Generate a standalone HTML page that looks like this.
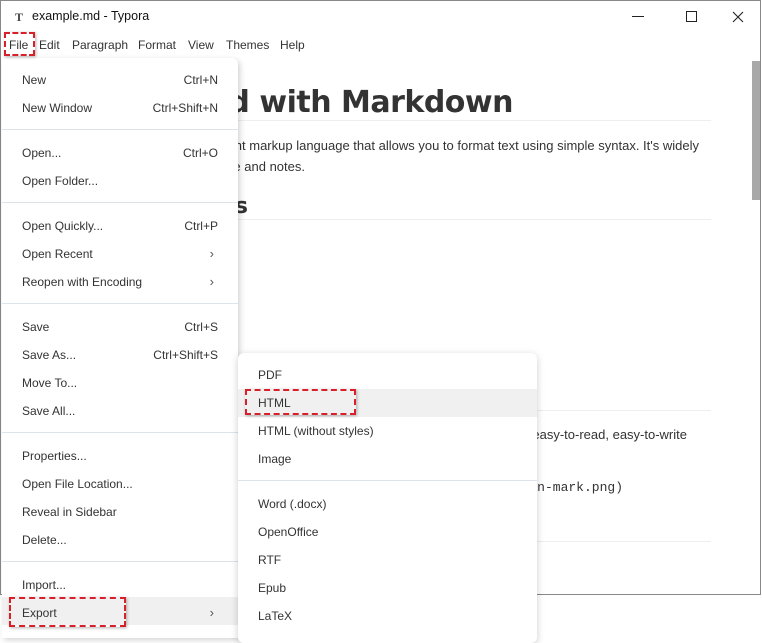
<!DOCTYPE html>
<html><head><meta charset="utf-8"><style>
*{margin:0;padding:0;box-sizing:border-box}
body{width:762px;height:631px;overflow:hidden;background:#fff;font-family:"Liberation Sans",sans-serif;position:relative;color:#222}
.a{position:absolute;white-space:nowrap}
.win{position:absolute;left:0;top:0;width:761px;height:595px;border:1px solid #888;background:#fff;overflow:hidden}
.mi{position:absolute;font-size:12px;color:#333}
.menu{position:absolute;left:2px;top:58px;width:236px;height:580px;background:#fff;box-shadow:2px 2px 6px rgba(0,0,0,.18);border-radius:0 6px 0 0}
.sub{position:absolute;left:238px;top:353px;width:299px;height:290px;background:#fff;box-shadow:0 2px 8px rgba(0,0,0,.2);border-radius:6px}
.it{position:absolute;left:20px;font-size:12px;color:#333;height:28px;line-height:28px}
.sc{position:absolute;right:20px;font-size:12px;color:#333;height:28px;line-height:28px}
.sep{position:absolute;left:0;right:0;height:1px;background:#dde3ea}
.arr{position:absolute;right:24px;font-size:13px;color:#555;height:28px;line-height:28px}
.dash{position:absolute;border:2px dashed #d9202a;box-shadow:1px 1px 3px rgba(0,0,0,.3)}
.r{position:absolute;white-space:nowrap;text-align:right}
</style></head><body>
<div class="win">
 <div class="a" style="left:11px;top:8px;width:14px;height:16px;font:bold 12px 'Liberation Serif',serif;color:#444;text-align:center;line-height:16px">T</div>
 <div class="a" style="left:31px;top:8px;font-size:12.5px;color:#111">example.md - Typora</div>
 <div class="a" style="left:631px;top:15px;width:12px;height:1px;background:#222"></div>
 <div class="a" style="left:685px;top:10px;width:11px;height:11px;border:1px solid #222"></div>
 <svg class="a" style="left:731px;top:10px" width="12" height="12"><path d="M1 1L11 11M11 1L1 11" stroke="#222" stroke-width="1.1"/></svg>
 <div class="mi" style="left:8px;top:37px">File</div>
 <div class="mi" style="left:38px;top:37px">Edit</div>
 <div class="mi" style="left:71px;top:37px">Paragraph</div>
 <div class="mi" style="left:137px;top:37px">Format</div>
 <div class="mi" style="left:187px;top:37px">View</div>
 <div class="mi" style="left:225px;top:37px">Themes</div>
 <div class="mi" style="left:279px;top:37px">Help</div>
 <div class="a" style="left:751px;top:60px;width:8px;height:139px;background:#a8a8a8"></div>
 <div style="position:absolute;left:100px;top:60px;width:640px;height:530px;overflow:hidden">
 <div class="r" style="right:228px;top:24px;font:bold 30px 'DejaVu Sans',sans-serif;color:#333;letter-spacing:-0.5px">Getting Started with Markdown</div>
 <div class="r" style="right:42px;top:77px;font-size:13px;color:#333">Markdown is a lightweight markup language that allows you to format text using simple syntax. It's widely</div>
 <div class="r" style="right:436px;top:98px;font-size:13px;color:#333">used for documentation, readme and notes.</div>
 <div class="r" style="right:493px;top:133px;font:bold 22px 'DejaVu Sans',sans-serif;color:#333">Basic Features</div>
 <div class="r" style="right:54px;top:366px;font-size:13px;color:#333">Markdown is designed to be an easy-to-read, easy-to-write</div>
 <div class="r" style="right:118px;top:419px;font:13px 'Liberation Mono',monospace;color:#333">![markdown](markdown-mark.png)</div>
 </div>
 <div class="a" style="left:150px;top:119px;width:560px;height:1px;background:#eee"></div>
 <div class="a" style="left:150px;top:218px;width:560px;height:1px;background:#eee"></div>
 <div class="a" style="left:150px;top:409px;width:560px;height:1px;background:#eee"></div>
 <div class="a" style="left:150px;top:540px;width:560px;height:1px;background:#eee"></div>
</div>
<div class="menu">
 <div class="it" style="top:8px">New</div><div class="sc" style="top:8px">Ctrl+N</div>
 <div class="it" style="top:36px">New Window</div><div class="sc" style="top:36px">Ctrl+Shift+N</div>
 <div class="sep" style="top:71px"></div>
 <div class="it" style="top:81px">Open...</div><div class="sc" style="top:81px">Ctrl+O</div>
 <div class="it" style="top:109px">Open Folder...</div>
 <div class="sep" style="top:144px"></div>
 <div class="it" style="top:154px">Open Quickly...</div><div class="sc" style="top:154px">Ctrl+P</div>
 <div class="it" style="top:182px">Open Recent</div><div class="arr" style="top:182px">›</div>
 <div class="it" style="top:210px">Reopen with Encoding</div><div class="arr" style="top:210px">›</div>
 <div class="sep" style="top:245px"></div>
 <div class="it" style="top:255px">Save</div><div class="sc" style="top:255px">Ctrl+S</div>
 <div class="it" style="top:283px">Save As...</div><div class="sc" style="top:283px">Ctrl+Shift+S</div>
 <div class="it" style="top:311px">Move To...</div>
 <div class="it" style="top:339px">Save All...</div>
 <div class="sep" style="top:374px"></div>
 <div class="it" style="top:384px">Properties...</div>
 <div class="it" style="top:412px">Open File Location...</div>
 <div class="it" style="top:440px">Reveal in Sidebar</div>
 <div class="it" style="top:468px">Delete...</div>
 <div class="sep" style="top:503px"></div>
 <div class="it" style="top:513px">Import...</div>
 <div class="a" style="left:0;right:0;top:539px;height:28px;background:#f0f0f0"></div>
 <div class="it" style="top:541px">Export</div><div class="arr" style="top:541px">›</div>
</div>
<div class="sub">
 <div class="it" style="top:8px">PDF</div>
 <div class="a" style="left:0;right:0;top:36px;height:28px;background:#f0f0f0"></div>
 <div class="it" style="top:36px">HTML</div>
 <div class="it" style="top:64px">HTML (without styles)</div>
 <div class="it" style="top:92px">Image</div>
 <div class="sep" style="top:127px"></div>
 <div class="it" style="top:137px">Word (.docx)</div>
 <div class="it" style="top:165px">OpenOffice</div>
 <div class="it" style="top:193px">RTF</div>
 <div class="it" style="top:221px">Epub</div>
 <div class="it" style="top:249px">LaTeX</div>
</div>
<div class="dash" style="left:4px;top:32px;width:31px;height:24px"></div>
<div class="dash" style="left:9px;top:597px;width:117px;height:30px"></div>
<div class="dash" style="left:245px;top:389px;width:111px;height:26px"></div>
</body></html>
